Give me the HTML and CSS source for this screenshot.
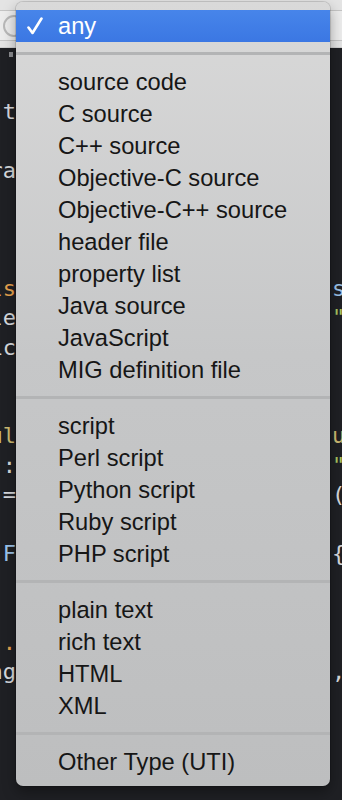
FILE: index.html
```html
<!DOCTYPE html>
<html lang="en">
<head>
  <meta charset="UTF-8">
  <title>File type menu</title>
  <link rel="stylesheet" href="styles.css">
</head>
<body>

  <header class="toolbar">
    <div class="field">
      <span class="field-btn"></span>
    </div>
  </header>

  <div class="editor">
    <div class="code-line first"><span class="left"><span class="mark"></span></span><span class="right"></span></div>
    <div class="code-line"><span class="left"></span><span class="right"></span></div>
    <div class="code-line"><span class="left"><span class="orange">.</span>t</span><span class="right"></span></div>
    <div class="code-line"><span class="left"></span><span class="right"></span></div>
    <div class="code-line"><span class="left">ra</span><span class="right"></span></div>
    <div class="code-line"><span class="left"></span><span class="right"></span></div>
    <div class="code-line"><span class="left"></span><span class="right"></span></div>
    <div class="code-line"><span class="left"></span><span class="right"></span></div>
    <div class="code-line"><span class="left orange">ls</span><span class="right"><span class="blue">s</span></span></div>
    <div class="code-line"><span class="left">le</span><span class="right"><span class="green">"</span></span></div>
    <div class="code-line"><span class="left">ic</span><span class="right"></span></div>
    <div class="code-line"><span class="left"></span><span class="right"></span></div>
    <div class="code-line"><span class="left"></span><span class="right"></span></div>
    <div class="code-line"><span class="left khaki">ul</span><span class="right"><span class="khaki">u</span></span></div>
    <div class="code-line"><span class="left">:</span><span class="right"><span class="green">"</span></span></div>
    <div class="code-line"><span class="left">=</span><span class="right">(</span></div>
    <div class="code-line"><span class="left"></span><span class="right"></span></div>
    <div class="code-line"><span class="left"><span class="orange">.</span><span class="blue">F</span></span><span class="right">{</span></div>
    <div class="code-line"><span class="left"></span><span class="right"></span></div>
    <div class="code-line"><span class="left"></span><span class="right"></span></div>
    <div class="code-line"><span class="left orange">.</span><span class="right"></span></div>
    <div class="code-line"><span class="left">ng</span><span class="right">,</span></div>
  </div>

  <div class="menu">
    <div class="menu-item selected">
      <svg class="check" width="16" height="18" viewBox="0 0 16 18">
        <path d="M1.5 10.5 L5.5 16 L14.5 1.5" fill="none" stroke="#fff" stroke-width="2.6" stroke-linecap="round" stroke-linejoin="round"/>
      </svg>
      any
    </div>
    <div class="separator"></div>
    <div class="menu-item">source code</div>
    <div class="menu-item">C source</div>
    <div class="menu-item">C++ source</div>
    <div class="menu-item">Objective-C source</div>
    <div class="menu-item">Objective-C++ source</div>
    <div class="menu-item">header file</div>
    <div class="menu-item">property list</div>
    <div class="menu-item">Java source</div>
    <div class="menu-item">JavaScript</div>
    <div class="menu-item">MIG definition file</div>
    <div class="separator"></div>
    <div class="menu-item">script</div>
    <div class="menu-item">Perl script</div>
    <div class="menu-item">Python script</div>
    <div class="menu-item">Ruby script</div>
    <div class="menu-item">PHP script</div>
    <div class="separator"></div>
    <div class="menu-item">plain text</div>
    <div class="menu-item">rich text</div>
    <div class="menu-item">HTML</div>
    <div class="menu-item">XML</div>
    <div class="separator"></div>
    <div class="menu-item">Other Type (UTI)</div>
  </div>

</body>
</html>
```

FILE: styles.css
```css
* {
  margin: 0;
  padding: 0;
  box-sizing: border-box;
}

body {
  width: 342px;
  height: 800px;
  overflow: hidden;
  background-color: #1f2024;
  position: relative;
  font-family: "Liberation Sans", Arial, sans-serif;
}

.toolbar {
  height: 48px;
  background-color: #e4e4e4;
  border-bottom: 1px solid #cfcfcf;
  padding-top: 10px;
}

.field {
  height: 31px;
  background-color: #ececec;
  border-top: 1px solid #c4c4c4;
  border-bottom: 1px solid #c4c4c4;
  padding: 4px 0 0 3px;
}

.field-btn {
  display: block;
  width: 22px;
  height: 22px;
  border: 2px solid #b9b9b9;
  border-radius: 50%;
}

/* code behind the menu */
.editor {
  font-family: "DejaVu Sans Mono", monospace;
  font-size: 22px;
  color: #d6d8dc;
}

.code-line {
  height: 29.5px;
  line-height: 29.5px;
  display: flex;
  justify-content: space-between;
}

.code-line.first {
  height: 19px;
  line-height: 19px;
}

.code-line .left {
  width: 16px;
  display: flex;
  justify-content: flex-end;
  white-space: nowrap;
}

.code-line .right {
  width: 10px;
  white-space: nowrap;
}

.mark {
  display: block;
  width: 4px;
  height: 5px;
  margin: 4px 3px 0 0;
  background-color: #8a8b8f;
}

.orange { color: #e6a24e; }
.khaki { color: #cdbb72; }
.blue { color: #9cc3ea; }
.green { color: #a9c561; }

/* popup menu */
.menu {
  position: absolute;
  top: 2px;
  left: 16px;
  width: 314px;
  padding: 8px 0;
  border-radius: 7px;
  background: linear-gradient(#d9d9d9, #c6c7c8 45%, #bdbebf);
  box-shadow: 0 0 0 1px rgba(0, 0, 0, 0.12), 0 6px 14px rgba(0, 0, 0, 0.35);
}

.menu-item {
  height: 32px;
  line-height: 32px;
  padding-left: 42px;
  font-size: 23.7px;
  color: #161616;
  position: relative;
}

.menu-item.selected {
  background: linear-gradient(#4785ea, #3b77e3);
  color: #ffffff;
}

.check {
  position: absolute;
  left: 11px;
  top: 7px;
}

.separator {
  height: 3px;
  margin: 10px 0 11px;
  background-color: #b3b4b5;
}
```
